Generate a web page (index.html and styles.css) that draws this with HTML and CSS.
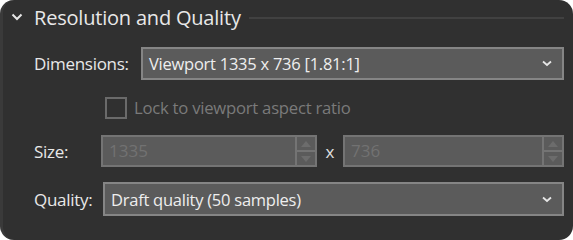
FILE: index.html
```html
<!DOCTYPE html>
<html lang="en">
<head>
    <meta charset="UTF-8">
    <title>Render Settings</title>
    <link rel="stylesheet" href="styles.css">
</head>
<body>
<div class="panel">
    <div class="panel-title">
        <svg class="chevron" width="12" height="8" viewBox="0 0 12 8"><path d="M1.5 1.5 L6 6 L10.5 1.5" fill="none" stroke="#e6e6e6" stroke-width="2"/></svg>
        <span>Resolution and Quality</span>
        <div class="rule"></div>
    </div>
    <div class="row dims-row">
        <label class="label">Dimensions:</label>
        <div class="select">
            <span>Viewport 1335 x 736 [1.81:1]</span>
            <svg width="10" height="7" viewBox="0 0 10 7"><path d="M1 1.5 L5 5 L9 1.5" fill="none" stroke="#e6e6e6" stroke-width="1.8"/></svg>
        </div>
    </div>
    <div class="row check-row">
        <div class="checkbox"></div>
        <span class="check-label">Lock to viewport aspect ratio</span>
    </div>
    <div class="row size-row">
        <label class="label">Size:</label>
        <div class="spin spin-w">
            <span class="spin-value">1335</span>
            <div class="spin-btns">
                <div class="spin-btn"><svg width="10" height="6" viewBox="0 0 10 6"><path d="M0 6 L5 0 L10 6Z" fill="#6c6c6c"/></svg></div>
                <div class="spin-btn"><svg width="10" height="6" viewBox="0 0 10 6"><path d="M0 0 L5 6 L10 0Z" fill="#6c6c6c"/></svg></div>
            </div>
        </div>
        <span class="times">x</span>
        <div class="spin spin-h">
            <span class="spin-value">736</span>
            <div class="spin-btns">
                <div class="spin-btn"><svg width="10" height="6" viewBox="0 0 10 6"><path d="M0 6 L5 0 L10 6Z" fill="#6c6c6c"/></svg></div>
                <div class="spin-btn"><svg width="10" height="6" viewBox="0 0 10 6"><path d="M0 0 L5 6 L10 0Z" fill="#6c6c6c"/></svg></div>
            </div>
        </div>
    </div>
    <div class="row quality-row">
        <label class="label">Quality:</label>
        <div class="select">
            <span>Draft quality (50 samples)</span>
            <svg width="10" height="7" viewBox="0 0 10 7"><path d="M1 1.5 L5 5 L9 1.5" fill="none" stroke="#e6e6e6" stroke-width="1.8"/></svg>
        </div>
    </div>
</div>
</body>
</html>
```

FILE: styles.css
```css
body {
    margin: 0;
    background: #ffffff;
    font-family: "Open Sans", "Noto Sans", sans-serif;
    color: #e8e8e8;
}
.panel {
    width: 573px;
    height: 240px;
    box-sizing: border-box;
    background: #303030;
    border-left: 3px solid #3a3a3a;
    border-radius: 14px;
    padding: 2px 9px 0 7px;
}
.panel-title {
    display: flex;
    align-items: center;
    height: 30px;
    font-size: 20px;
    letter-spacing: -0.2px;
}
.chevron {
    margin: 0 11px 0 1px;
}
.rule {
    flex: 1;
    height: 2px;
    background: #414141;
    margin-left: 8px;
    margin-top: 1px;
}
.row {
    display: flex;
    align-items: center;
}
.label {
    font-size: 17px;
    letter-spacing: -0.3px;
    padding-left: 24px;
}
.dims-row {
    margin-top: 15px;
}
.dims-row .label {
    width: 107px;
}
.select {
    flex: 1;
    height: 33px;
    box-sizing: border-box;
    background: #5b5b5b;
    border: 2px solid #858585;
    display: flex;
    align-items: center;
    justify-content: space-between;
    padding: 0 10px 0 6px;
    font-size: 16.5px;
    letter-spacing: -0.25px;
    color: #eeeeee;
}
.check-row {
    margin-top: 16px;
    padding-left: 95px;
}
.checkbox {
    width: 22px;
    height: 22px;
    box-sizing: border-box;
    border: 2px solid #6a6a6a;
}
.check-label {
    margin-left: 7px;
    font-size: 16.7px;
    letter-spacing: -0.25px;
    color: #7a7a7a;
}
.size-row {
    margin-top: 16px;
}
.size-row .label {
    width: 67px;
}
.spin {
    height: 32px;
    box-sizing: border-box;
    background: #5b5b5b;
    border: 2px solid #747474;
    display: flex;
}
.spin-w {
    width: 216px;
}
.spin-h {
    flex: 1;
}
.spin-value {
    flex: 1;
    padding-left: 6px;
    font-size: 17px;
    line-height: 28px;
    color: #727272;
}
.spin-btns {
    width: 18px;
    border-left: 2px solid #747474;
    display: flex;
    flex-direction: column;
}
.spin-btn {
    flex: 1;
    display: flex;
    align-items: center;
    justify-content: center;
}
.spin-btn + .spin-btn {
    border-top: 2px solid #747474;
}
.times {
    width: 26px;
    text-align: center;
    font-size: 17px;
    color: #e0e0e0;
}
.quality-row {
    margin-top: 15px;
}
.quality-row .label {
    width: 69px;
}
.quality-row .select {
    height: 34px;
}
```
